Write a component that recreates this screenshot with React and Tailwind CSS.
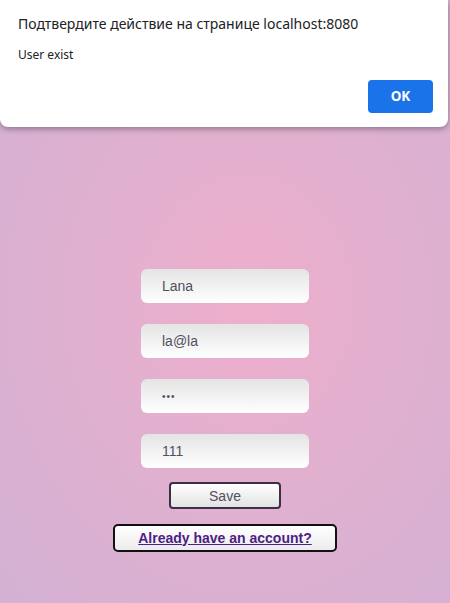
import React from "react";

export default function App() {
  return (
    <div className="relative h-[603px] w-[450px] overflow-hidden bg-[radial-gradient(ellipse_at_55%_50%,#eeaecb_0%,#e2b0cf_40%,#d3b1d4_100%)] font-['Liberation_Sans',Arial,sans-serif]">
      <div className="absolute left-0 top-[10px] h-[30px] w-[2px] bg-[#7a3f9a]" />
      <div className="flex flex-col items-center pt-[269px]">
        <div className="flex flex-col gap-[21px]">
          {["Lana", "la@la", "•••", "111"].map((v, i) => (
            <div
              key={i}
              className="flex h-[34px] w-[168px] items-center rounded-[6px] bg-gradient-to-b from-[#e4e4e4] to-[#ffffff] pl-[21px] text-[14px] text-[#505060]"
            >
              {i === 2 ? <span className="pt-[1px] text-[10px] tracking-[1px]">•••</span> : v}
            </div>
          ))}
        </div>
        <div className="mt-[14px] flex h-[27px] w-[112px] items-center justify-center rounded-[4px] border-2 border-[#3b2f48] bg-gradient-to-b from-[#ffffff] to-[#e2e2e2] pt-[2px] text-[14px] text-[#505060]">
          Save
        </div>
        <div className="mt-[15px] flex h-[28px] w-[224px] items-center justify-center rounded-[5px] border-2 border-[#111] bg-gradient-to-b from-[#ffffff] to-[#ececec] text-[14px] font-bold text-[#4e1d85] underline">
          Already have an account?
        </div>
      </div>

      <div className="absolute left-0 top-0 h-[127px] w-[448px] rounded-b-[8px] bg-white shadow-[0_2px_6px_rgba(0,0,0,0.35)] font-['Noto_Sans','Open_Sans',sans-serif]">
        <div className="pl-[18px] pt-[14px] text-[14px] leading-[20px] text-[#202124]">
          Подтвердите действие на странице localhost:8080
        </div>
        <div className="pl-[18px] pt-[13px] text-[12px] leading-[16px] text-[#202124]">
          User exist
        </div>
        <div className="flex justify-end pr-[15px] pt-[17px]">
          <div className="flex h-[33px] w-[65px] items-center justify-center rounded-[4px] bg-[#1a73e8] text-[13.5px] font-bold text-white">
            OK
          </div>
        </div>
      </div>
    </div>
  );
}
